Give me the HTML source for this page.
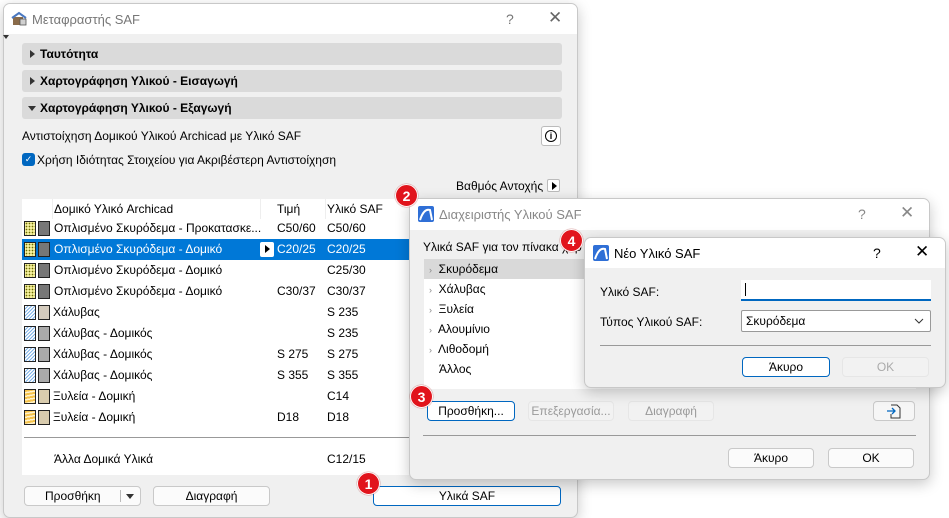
<!DOCTYPE html>
<html><head><meta charset="utf-8"><style>
*{margin:0;padding:0;box-sizing:border-box}
body{width:949px;height:511px;background:#fff;position:relative;overflow:hidden;font-family:"Liberation Sans","DejaVu Sans",sans-serif;font-size:12px;color:#000}
.a{position:absolute}
.dlg{position:absolute;background:#f0f0f0;border:1px solid #c8c8c8;border-radius:7px;overflow:hidden;box-shadow:0 4px 14px rgba(0,0,0,.22)}
.tb{position:absolute;left:0;top:0;right:0;background:#fff}
.sec{position:absolute;left:22px;width:540px;height:22px;background:#dadada;border-radius:3px;font-weight:bold;font-size:12px;line-height:22px;padding-left:18px}
.sec:before{content:"";position:absolute;left:8px;top:7px;border-left:5px solid #333;border-top:4px solid transparent;border-bottom:4px solid transparent}
.sec.open:before{left:6px;top:9px;border-top:5px solid #333;border-left:4px solid transparent;border-right:4px solid transparent;border-bottom:0}
.btn{position:absolute;height:20px;border:1px solid #c9c9c9;border-radius:4px;background:#fbfbfb;text-align:center;line-height:18px;font-size:12px}
.btn.pri{border:1px solid #0067c0;background:#fff}
.btn.dis{color:#999;background:#f2f2f2;border-color:#e6e6e6}
.row{position:absolute;left:22px;width:400px;height:21px;line-height:21px}
.row span{position:absolute}
.sw{position:absolute;top:3px;width:12px;height:15px;border:1px solid #222}
.badge{position:absolute;width:23px;height:23px;border-radius:50%;background:#e1141c;color:#fff;font-weight:bold;font-size:14px;text-align:center;line-height:23px;border:1.5px solid #fff;box-shadow:0 0 1px #900}
.conc{background:#f4ef9c;background-image:radial-gradient(#6d6d00 0.7px,transparent 0.9px);background-size:3px 3px}
.steel{background:repeating-linear-gradient(135deg,#fff 0 1.5px,#7fb3e8 1.5px 2.5px)}
.wood{background:repeating-linear-gradient(170deg,#f5c24a 0 2px,#fff2cc 2px 3.5px)}
.x{position:absolute;font-size:17px;color:#444}
</style></head><body>

<div class="dlg" style="left:3px;top:3px;width:575px;height:515px">
 <div class="tb" style="height:30px">
  <svg class="a" style="left:7px;top:7px" width="17" height="16" viewBox="0 0 17 16"><rect x="2" y="6" width="10" height="8" fill="#8a6b4a"/><path d="M1 7 L8 2 L15 7" stroke="#4a78c0" stroke-width="2" fill="none"/><rect x="9" y="8" width="6" height="6" fill="#d0d0d0" stroke="#555" stroke-width=".8"/></svg>
  <div class="a" style="left:28px;top:8px;font-size:13px;color:#777">Μεταφραστής SAF</div>
  <div class="a" style="left:502px;top:7px;font-size:14px;color:#777">?</div>
  <div class="x" style="left:544px;top:4px;color:#666">✕</div>
 </div>
</div>
<div class="a" style="left:3px;top:35px;border-top:4px solid #333;border-left:3px solid transparent;border-right:3px solid transparent"></div>
<div class="sec" style="top:43px">Ταυτότητα</div>
<div class="sec" style="top:70px">Χαρτογράφηση Υλικού - Εισαγωγή</div>
<div class="sec open" style="top:97px">Χαρτογράφηση Υλικού - Εξαγωγή</div>
<div class="a" style="left:22px;top:129px">Αντιστοίχηση Δομικού Υλικού Archicad με Υλικό SAF</div>
<div class="a" style="left:541px;top:126px;width:20px;height:20px;border:1px solid #bbb;border-radius:3px;background:#fff"><div class="a" style="left:3px;top:3px;width:12px;height:12px;border:1.3px solid #000;border-radius:50%;font-size:9px;font-weight:bold;text-align:center;line-height:10px">i</div></div>
<div class="a" style="left:22px;top:153px;width:13px;height:13px;background:#0067c0;border-radius:3px;color:#fff;font-size:9px;text-align:center;line-height:13px">✓</div>
<div class="a" style="left:37px;top:153px">Χρήση Ιδιότητας Στοιχείου για Ακριβέστερη Αντιστοίχηση</div>
<div class="a" style="left:456px;top:179px">Βαθμός Αντοχής</div>
<div class="a" style="left:547px;top:179px;width:13px;height:13px;border:1px solid #bbb;border-radius:2px;background:#fff"><div class="a" style="left:4px;top:2px;border-left:5px solid #000;border-top:4px solid transparent;border-bottom:4px solid transparent"></div></div>

<div class="a" style="left:22px;top:199px;width:400px;height:276px;background:#fff"></div>
<div class="a" style="left:22px;top:199px;width:400px;height:20px;line-height:20px">
 <span class="a" style="left:30px;top:0;width:1px;height:20px;background:#eee"></span>
 <span class="a" style="left:32px">Δομικό Υλικό Archicad</span>
 <span class="a" style="left:238px;top:0;width:1px;height:20px;background:#eee"></span>
 <span class="a" style="left:255px">Τιμή</span>
 <span class="a" style="left:303px;top:0;width:1px;height:20px;background:#eee"></span>
 <span class="a" style="left:305px">Υλικό SAF</span>
</div>
<div class="row" style="top:218px"><div class="sw conc" style="left:2px"></div><div class="sw" style="left:16px;background:#777"></div><span style="left:32px">Οπλισμένο Σκυρόδεμα - Προκατασκε...</span><span style="left:255px">C50/60</span><span style="left:305px">C50/60</span></div>
<div class="row" style="top:239px;background:#0078d7;color:#fff"><div class="sw conc" style="left:2px"></div><div class="sw" style="left:16px;background:#777"></div><span style="left:32px">Οπλισμένο Σκυρόδεμα - Δομικό</span><div class="a" style="left:238px;top:3px;width:14px;height:15px;background:#fff;border-radius:2px"><div class="a" style="left:5px;top:3px;border-left:5px solid #000;border-top:4px solid transparent;border-bottom:4px solid transparent"></div></div><span style="left:255px">C20/25</span><span style="left:305px">C20/25</span></div>
<div class="row" style="top:260px"><div class="sw conc" style="left:2px"></div><div class="sw" style="left:16px;background:#777"></div><span style="left:32px">Οπλισμένο Σκυρόδεμα - Δομικό</span><span style="left:305px">C25/30</span></div>
<div class="row" style="top:281px"><div class="sw conc" style="left:2px"></div><div class="sw" style="left:16px;background:#777"></div><span style="left:32px">Οπλισμένο Σκυρόδεμα - Δομικό</span><span style="left:255px">C30/37</span><span style="left:305px">C30/37</span></div>
<div class="row" style="top:302px"><div class="sw steel" style="left:2px"></div><div class="sw" style="left:16px;background:#d4cbbd"></div><span style="left:31px">Χάλυβας</span><span style="left:305px">S 235</span></div>
<div class="row" style="top:323px"><div class="sw steel" style="left:2px"></div><div class="sw" style="left:16px;background:#aaa"></div><span style="left:31px">Χάλυβας - Δομικός</span><span style="left:305px">S 235</span></div>
<div class="row" style="top:344px"><div class="sw steel" style="left:2px"></div><div class="sw" style="left:16px;background:#aaa"></div><span style="left:31px">Χάλυβας - Δομικός</span><span style="left:255px">S 275</span><span style="left:305px">S 275</span></div>
<div class="row" style="top:365px"><div class="sw steel" style="left:2px"></div><div class="sw" style="left:16px;background:#aaa"></div><span style="left:31px">Χάλυβας - Δομικός</span><span style="left:255px">S 355</span><span style="left:305px">S 355</span></div>
<div class="row" style="top:386px"><div class="sw wood" style="left:2px"></div><div class="sw" style="left:16px;background:#d9ccae"></div><span style="left:31px">Ξυλεία - Δομική</span><span style="left:305px">C14</span></div>
<div class="row" style="top:407px"><div class="sw wood" style="left:2px"></div><div class="sw" style="left:16px;background:#d9ccae"></div><span style="left:31px">Ξυλεία - Δομική</span><span style="left:255px">D18</span><span style="left:305px">D18</span></div>
<div class="a" style="left:24px;top:437px;width:400px;height:1px;background:#999"></div>
<div class="row" style="top:449px"><span style="left:32px">Άλλα Δομικά Υλικά</span><span style="left:305px">C12/15</span></div>

<div class="btn" style="left:24px;top:486px;width:117px">
 <span class="a" style="left:20px;top:0">Προσθήκη</span>
 <span class="a" style="left:95px;top:3px;width:1px;height:12px;background:#bbb"></span>
 <span class="a" style="left:101px;top:7px;border-top:5px solid #333;border-left:4px solid transparent;border-right:4px solid transparent"></span>
</div>
<div class="btn" style="left:153px;top:486px;width:117px">Διαγραφή</div>
<div class="btn pri" style="left:373px;top:486px;width:188px">Υλικά SAF</div>

<div class="dlg" style="left:409px;top:198px;width:521px;height:282px">
 <div class="tb" style="height:31px">
  <svg class="a" style="left:8px;top:7px" width="16" height="16" viewBox="0 0 16 16"><rect width="16" height="16" rx="2" fill="#2f6fd6"/><path d="M2 14 Q6 2 12 4 L14 14" stroke="#fff" stroke-width="2" fill="none"/></svg>
  <div class="a" style="left:29px;top:8px;font-size:13px;color:#888">Διαχειριστής Υλικού SAF</div>
  <div class="a" style="left:448px;top:7px;font-size:14px;color:#888">?</div>
  <div class="x" style="left:490px;top:4px;color:#888">✕</div>
 </div>
 <div class="a" style="left:13px;top:41px">Υλικά SAF για τον πίνακα χαρ</div>
 <div class="a" style="left:14px;top:60px;width:492px;height:130px;background:#fff"></div>
 <div class="a" style="left:14px;top:60px;width:170px;height:20px;background:#d9d9d9"></div>
 <div class="a" style="left:19px;top:63px"><span style="color:#888;font-size:9px">›</span>&nbsp; Σκυρόδεμα</div>
 <div class="a" style="left:19px;top:83px"><span style="color:#888;font-size:9px">›</span>&nbsp; Χάλυβας</div>
 <div class="a" style="left:19px;top:103px"><span style="color:#888;font-size:9px">›</span>&nbsp; Ξυλεία</div>
 <div class="a" style="left:19px;top:123px"><span style="color:#888;font-size:9px">›</span>&nbsp; Αλουμίνιο</div>
 <div class="a" style="left:19px;top:143px"><span style="color:#888;font-size:9px">›</span>&nbsp; Λιθοδομή</div>
 <div class="a" style="left:29px;top:163px">Άλλος</div>
 <div class="btn pri" style="left:17px;top:202px;width:88px">Προσθήκη...</div>
 <div class="btn dis" style="left:118px;top:202px;width:86px">Επεξεργασία...</div>
 <div class="btn dis" style="left:218px;top:202px;width:86px">Διαγραφή</div>
 <div class="btn" style="left:463px;top:202px;width:42px;background:#f6f6f6"><svg style="margin-top:2px" width="16" height="15" viewBox="0 0 16 15"><path d="M5 1 H11 L14 4 V14 H5 V10" stroke="#333" fill="none"/><path d="M1 7 H9 M6 4 L9 7 L6 10" stroke="#0067c0" stroke-width="1.3" fill="none"/></svg></div>
 <div class="a" style="left:13px;top:236px;width:493px;height:1px;background:#999"></div>
 <div class="btn" style="left:318px;top:249px;width:86px">Άκυρο</div>
 <div class="btn" style="left:418px;top:249px;width:86px">OK</div>
</div>

<div class="dlg" style="left:584px;top:237px;width:362px;height:151px">
 <div class="tb" style="height:30px">
  <svg class="a" style="left:8px;top:7px" width="16" height="16" viewBox="0 0 16 16"><rect width="16" height="16" rx="2" fill="#2f6fd6"/><path d="M2 14 Q6 2 12 4 L14 14" stroke="#fff" stroke-width="2" fill="none"/></svg>
  <div class="a" style="left:29px;top:8px;font-size:13px;color:#000">Νέο Υλικό SAF</div>
  <div class="a" style="left:288px;top:7px;font-size:14px;color:#000">?</div>
  <div class="x" style="left:330px;top:4px;color:#000">✕</div>
 </div>
 <div class="a" style="left:15px;top:47px">Υλικό SAF:</div>
 <div class="a" style="left:156px;top:42px;width:190px;height:21px;background:#fff;border-bottom:2px solid #0067c0"><div class="a" style="left:4px;top:3px;width:1px;height:13px;background:#000"></div></div>
 <div class="a" style="left:15px;top:77px">Τύπος Υλικού SAF:</div>
 <div class="a" style="left:156px;top:72px;width:190px;height:22px;background:#fff;border:1px solid #999;border-radius:2px;line-height:20px;padding-left:4px">Σκυρόδεμα<svg class="a" style="right:6px;top:7px" width="10" height="6" viewBox="0 0 10 6"><path d="M1 1 L5 5 L9 1" stroke="#333" fill="none"/></svg></div>
 <div class="a" style="left:15px;top:107px;width:331px;height:1px;background:#999"></div>
 <div class="btn pri" style="left:157px;top:119px;width:88px">Άκυρο</div>
 <div class="btn dis" style="left:257px;top:119px;width:87px;color:#aaa">OK</div>
</div>

<div class="badge" style="left:357px;top:472px">1</div>
<div class="badge" style="left:395px;top:184px">2</div>
<div class="badge" style="left:410px;top:385px">3</div>
<div class="badge" style="left:560px;top:229px">4</div>
</body></html>
